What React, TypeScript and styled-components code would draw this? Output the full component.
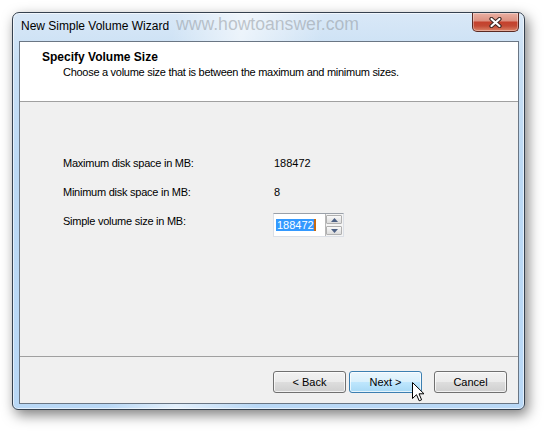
import React from "react"
import styled, {createGlobalStyle} from "styled-components"

const GlobalStyle = createGlobalStyle`
  html, body {
    margin: 0;
    padding: 0;
    background: #ffffff;
  }
  body {
    font-family: "Liberation Sans", Arial, sans-serif;
    color: #000000;
  }
`

const Desktop = styled.div`
  position: relative;
  width: 545px;
  height: 431px;
  padding: 12px 0 0 12px;
  box-sizing: border-box;
  overflow: hidden;
`

const Window = styled.div`
  width: 513px;
  height: 398px;
  box-sizing: border-box;
  border: 1px solid #35414f;
  border-radius: 7px 7px 6px 6px;
  padding: 0 5px 5px 6px;
  display: flex;
  flex-direction: column;
  background:
    linear-gradient(100deg, rgba(255, 255, 255, 0) 28%, rgba(255, 255, 255, 0.6) 40%, rgba(255, 255, 255, 0) 54%),
    linear-gradient(180deg, #d9e8f7 0%, #c8dff4 12%, #bcd9f4 40%, #b9d8f6 100%);
  box-shadow:
    inset 0 0 0 1px rgba(255, 255, 255, 0.6),
    3px 5px 13px rgba(0, 0, 0, 0.5);
`

const TitleBar = styled.div`
  height: 28px;
  display: flex;
  align-items: flex-start;
  flex-shrink: 0;
`

const Title = styled.div`
  margin: 6px 0 0 2px;
  font-size: 12px;
  line-height: 15px;
  color: #000000;
  white-space: nowrap;
`

const Watermark = styled.div`
  margin: 1px 0 0 7px;
  font-size: 17.6px;
  line-height: 20px;
  color: rgba(140, 146, 152, 0.5);
  white-space: nowrap;
`

const CloseButton = styled.div`
  margin-left: auto;
  width: 47px;
  height: 19px;
  box-sizing: border-box;
  border: 1px solid #5a2a23;
  border-top: none;
  border-radius: 0 0 5px 5px;
  display: flex;
  align-items: center;
  justify-content: center;
  background: linear-gradient(180deg, #eab0a3 0%, #dd9282 42%, #c4412d 52%, #c34a35 72%, #dc8468 100%);
  box-shadow: inset 0 0 0 1px rgba(255, 255, 255, 0.35);
`

const Client = styled.div`
  flex: 1;
  display: flex;
  flex-direction: column;
  border: 1px solid #6a7684;
  background: #f0f0f0;
`

const Header = styled.div`
  height: 60px;
  flex-shrink: 0;
  box-sizing: border-box;
  background: #ffffff;
  border-bottom: 1px solid #a0a0a0;
  padding: 8px 0 0 22px;
`

const HeaderTitle = styled.div`
  font-size: 12px;
  line-height: 15px;
  font-weight: bold;
`

const HeaderText = styled.div`
  margin-left: 21px;
  font-size: 11px;
  line-height: 15px;
  letter-spacing: -0.28px;
`

const Body = styled.div`
  height: 255px;
  flex-shrink: 0;
  box-sizing: border-box;
  border-bottom: 1px solid #a0a0a0;
  padding: 53px 0 0 43px;
  display: flex;
  flex-direction: column;
  gap: 13px;
`

const Row = styled.div<{ $tall?: boolean }>`
  display: flex;
  align-items: ${p => (p.$tall ? "flex-start" : "center")};
  height: ${p => (p.$tall ? 24 : 16)}px;
`

const Label = styled.div<{ $offset?: number }>`
  width: 210px;
  font-size: 11px;
  line-height: 15px;
  letter-spacing: -0.25px;
  padding-top: ${p => p.$offset ?? 0}px;
`

const Value = styled.div`
  padding-left: 1px;
  font-size: 11px;
  line-height: 15px;
`

const SpinBox = styled.div`
  width: 71px;
  height: 24px;
  box-sizing: border-box;
  display: flex;
  border: 1px solid #dbdfe6;
  border-top-color: #9aa0a8;
  background: #ffffff;
`

const EditField = styled.div`
  flex: 1;
  display: flex;
  align-items: center;
  padding-left: 2px;
`

const Selection = styled.span`
  background: #3399ff;
  color: #ffffff;
  font-size: 11px;
  line-height: 12px;
  padding: 0 0 0 1px;
  border-right: 2px solid #c86a10;
`

const SpinColumn = styled.div`
  width: 16px;
  display: flex;
  flex-direction: column;
  gap: 2px;
  padding: 1px 1px 1px 0;
  border-left: 1px solid #b8b8b8;
  background: #f4f4f4;
`

const SpinButton = styled.div`
  flex: 1;
  display: flex;
  align-items: center;
  justify-content: center;
  border: 1px solid #b0b0b0;
  border-radius: 1px;
  background: linear-gradient(180deg, #fafafa 0%, #eaeaea 50%, #dcdcdc 100%);
`

const Footer = styled.div`
  flex: 1;
  display: flex;
  justify-content: flex-end;
  align-items: flex-start;
  padding: 14px 11px 0 0;
`

const Button = styled.div<{ $hover?: boolean; $gap?: number }>`
  width: 73px;
  height: 22px;
  box-sizing: border-box;
  margin-left: ${p => p.$gap ?? 0}px;
  display: flex;
  align-items: center;
  justify-content: center;
  font-size: 11px;
  border: 1px solid ${p => (p.$hover ? "#3c7fb1" : "#707070")};
  border-radius: 3px;
  box-shadow: inset 0 0 0 1px rgba(255, 255, 255, 0.7);
  background: ${p =>
    p.$hover
      ? "linear-gradient(180deg, #eaf6fd 0%, #d9f0fc 48%, #bee6fd 52%, #a7d9f5 100%)"
      : "linear-gradient(180deg, #f2f2f2 0%, #ebebeb 48%, #dddddd 52%, #cfcfcf 100%)"};
`

const Pointer = styled.svg`
  position: absolute;
  left: 412px;
  top: 382px;
`

const Arrow = ({up}: { up?: boolean }) => (
  <svg width="7" height="4" viewBox="0 0 7 4">
    <path d={up ? "M0 4 L3.5 0 L7 4 Z" : "M0 0 L3.5 4 L7 0 Z"} fill="#4d6185"/>
  </svg>
)

export default function App() {
  return (
    <Desktop>
      <GlobalStyle/>
      <Window>
        <TitleBar>
          <Title>New Simple Volume Wizard</Title>
          <Watermark>www.howtoanswer.com</Watermark>
          <CloseButton>
            <svg width="13" height="11" viewBox="0 0 13 11">
              <path d="M2.5 2 L10.5 9 M10.5 2 L2.5 9" stroke="#3b2622" strokeWidth="4.2" strokeLinecap="round"/>
              <path d="M2.5 2 L10.5 9 M10.5 2 L2.5 9" stroke="#ffffff" strokeWidth="2.2" strokeLinecap="round"/>
            </svg>
          </CloseButton>
        </TitleBar>
        <Client>
          <Header>
            <HeaderTitle>Specify Volume Size</HeaderTitle>
            <HeaderText>Choose a volume size that is between the maximum and minimum sizes.</HeaderText>
          </Header>
          <Body>
            <Row>
              <Label>Maximum disk space in MB:</Label>
              <Value>188472</Value>
            </Row>
            <Row>
              <Label>Minimum disk space in MB:</Label>
              <Value>8</Value>
            </Row>
            <Row $tall>
              <Label $offset={1}>Simple volume size in MB:</Label>
              <SpinBox>
                <EditField>
                  <Selection>188472</Selection>
                </EditField>
                <SpinColumn>
                  <SpinButton><Arrow up/></SpinButton>
                  <SpinButton><Arrow/></SpinButton>
                </SpinColumn>
              </SpinBox>
            </Row>
          </Body>
          <Footer>
            <Button>&lt; Back</Button>
            <Button $hover $gap={3}>Next &gt;</Button>
            <Button $gap={12}>Cancel</Button>
          </Footer>
        </Client>
      </Window>
      <Pointer width="13" height="20" viewBox="0 0 13 20">
        <path d="M0.5 0.5 L0.5 16.5 L4.5 12.7 L7.2 18.8 L9.6 17.8 L7 11.8 L12 11.8 Z"
              fill="#ffffff" stroke="#000000" strokeWidth="1" strokeLinejoin="miter"/>
      </Pointer>
    </Desktop>
  )
}
